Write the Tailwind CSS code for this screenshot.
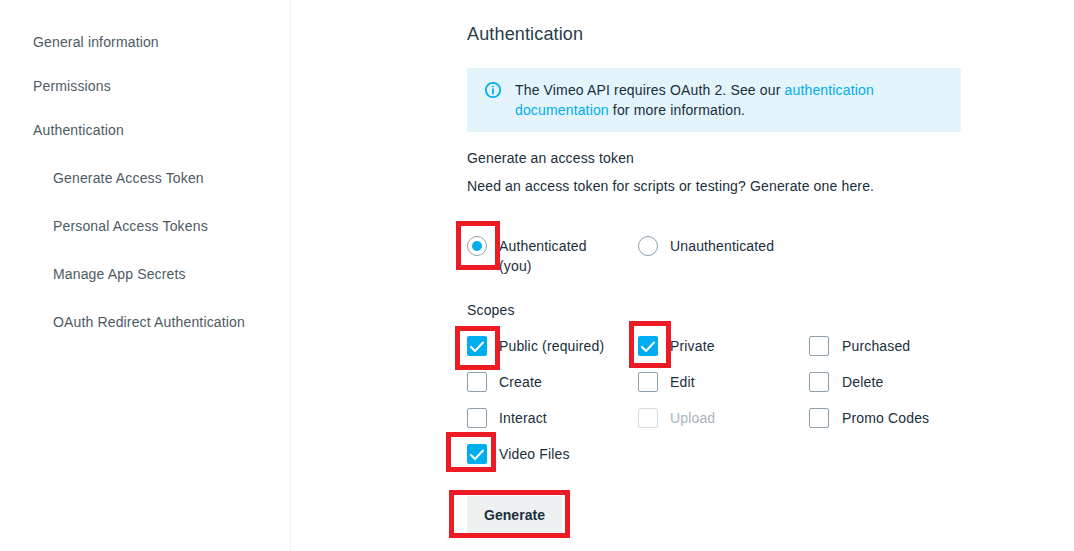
<!DOCTYPE html>
<html>
<head>
<meta charset="utf-8">
<script src="https://cdn.jsdelivr.net/npm/@tailwindcss/browser@4"></script>
</head>
<body class="bg-white font-['Liberation_Sans',Arial,sans-serif] text-[14px] tracking-[0.15px] text-[#1a2e3b] overflow-hidden">
<div class="relative flex w-[1074px] h-[551px] overflow-hidden">
  <aside class="w-[291px] h-[551px] shrink-0 border-r border-[#eef1f2] pt-[32px] text-[#4d5a64] leading-[20px]">
    <nav class="flex flex-col pl-[33px]">
      <a class="h-[44px]">General information</a>
      <a class="h-[44px]">Permissions</a>
      <a class="h-[48px]">Authentication</a>
      <div class="flex flex-col pl-[20px]">
        <a class="h-[48px]">Generate Access Token</a>
        <a class="h-[48px]">Personal Access Tokens</a>
        <a class="h-[48px]">Manage App Secrets</a>
        <a class="h-[48px]">OAuth Redirect Authentication</a>
      </div>
    </nav>
  </aside>
  <main class="pl-[176px] flex-1">
    <h2 class="text-[18px] leading-[24px] mt-[22px] text-[#2a3d4a]">Authentication</h2>
    <div class="mt-[22px] w-[494px] h-[64px] rounded-[3px] bg-[#e3f4fc] flex pl-[17px] pr-[40px] pt-[12px]">
      <svg class="w-[18px] h-[18px] mt-[1px] shrink-0" viewBox="0 0 18 18" fill="none" stroke="#00adef" stroke-width="1.8"><circle cx="9" cy="9" r="7.2"/><path d="M9 8.2v4.3" stroke-linecap="round"/><circle cx="9" cy="5.5" r="0.6" fill="#00adef" stroke-width="0.9"/></svg>
      <p class="ml-[13px] leading-[20px] text-[#1a2e3b]">The Vimeo API requires OAuth 2. See our <a class="text-[#00adef]">authentication documentation</a> for more information.</p>
    </div>
    <p class="mt-[16px] leading-[20px]">Generate an access token</p>
    <p class="mt-[8px] leading-[20px]">Need an access token for scripts or testing? Generate one here.</p>
    <div class="mt-[40px] grid grid-cols-[171px_171px] h-[40px]">
      <label class="flex items-start">
        <span class="w-[20px] h-[20px] rounded-full border border-[#8fa0ad] flex items-center justify-center shrink-0"><span class="w-[10px] h-[10px] rounded-full bg-[#00adef]"></span></span>
        <span class="ml-[12px] w-[100px] leading-[20px]">Authenticated (you)</span>
      </label>
      <label class="flex items-start">
        <span class="w-[20px] h-[20px] rounded-full border border-[#8fa0ad] shrink-0"></span>
        <span class="ml-[12px] leading-[20px]">Unauthenticated</span>
      </label>
    </div>
    <p class="mt-[24px] leading-[20px]">Scopes</p>
    <div class="mt-[16px] grid grid-cols-[171px_171px_171px] auto-rows-[36px] leading-[20px]">
      <label class="flex"><span class="w-[20px] h-[20px] rounded-[2px] bg-[#00adef] flex items-center justify-center"><svg class="w-[14px] h-[14px]" viewBox="0 0 14 14" fill="none" stroke="#fff" stroke-width="2" stroke-linecap="round" stroke-linejoin="round"><path d="M1 8l4 4 8-8.5"/></svg></span><span class="ml-[12px]">Public (required)</span></label>
      <label class="flex"><span class="w-[20px] h-[20px] rounded-[2px] bg-[#00adef] flex items-center justify-center"><svg class="w-[14px] h-[14px]" viewBox="0 0 14 14" fill="none" stroke="#fff" stroke-width="2" stroke-linecap="round" stroke-linejoin="round"><path d="M1 8l4 4 8-8.5"/></svg></span><span class="ml-[12px]">Private</span></label>
      <label class="flex"><span class="w-[20px] h-[20px] rounded-[2px] border border-[#8fa0ad]"></span><span class="ml-[13px]">Purchased</span></label>
      <label class="flex"><span class="w-[20px] h-[20px] rounded-[2px] border border-[#8fa0ad]"></span><span class="ml-[12px]">Create</span></label>
      <label class="flex"><span class="w-[20px] h-[20px] rounded-[2px] border border-[#8fa0ad]"></span><span class="ml-[12px]">Edit</span></label>
      <label class="flex"><span class="w-[20px] h-[20px] rounded-[2px] border border-[#8fa0ad]"></span><span class="ml-[13px]">Delete</span></label>
      <label class="flex"><span class="w-[20px] h-[20px] rounded-[2px] border border-[#8fa0ad]"></span><span class="ml-[12px]">Interact</span></label>
      <label class="flex"><span class="w-[20px] h-[20px] rounded-[2px] border border-[#d6dde2]"></span><span class="ml-[12px] text-[#a9b4bc]">Upload</span></label>
      <label class="flex"><span class="w-[20px] h-[20px] rounded-[2px] border border-[#8fa0ad]"></span><span class="ml-[13px]">Promo Codes</span></label>
      <label class="flex"><span class="w-[20px] h-[20px] rounded-[2px] bg-[#00adef] flex items-center justify-center"><svg class="w-[14px] h-[14px]" viewBox="0 0 14 14" fill="none" stroke="#fff" stroke-width="2" stroke-linecap="round" stroke-linejoin="round"><path d="M1 8l4 4 8-8.5"/></svg></span><span class="ml-[12px]">Video Files</span></label>
    </div>
    <button class="mt-[16px] block w-[95px] h-[37px] pt-[2px] rounded-[2px] bg-[#eef1f2] font-bold tracking-[0.05px] text-[#1a2e3b]">Generate</button>
  </main>
  <div class="absolute left-[456px] top-[221px] w-[44px] h-[49px] border-[5px] border-[#ed1c24]"></div>
  <div class="absolute left-[455px] top-[326px] w-[45px] h-[44px] border-[5px] border-[#ed1c24]"></div>
  <div class="absolute left-[629px] top-[321px] w-[42px] h-[47px] border-[5px] border-[#ed1c24]"></div>
  <div class="absolute left-[446px] top-[432px] w-[50px] h-[40px] border-[5px] border-[#ed1c24]"></div>
  <div class="absolute left-[449px] top-[490px] w-[121px] h-[48px] border-[5px] border-[#ed1c24]"></div>
</div>
</body>
</html>
